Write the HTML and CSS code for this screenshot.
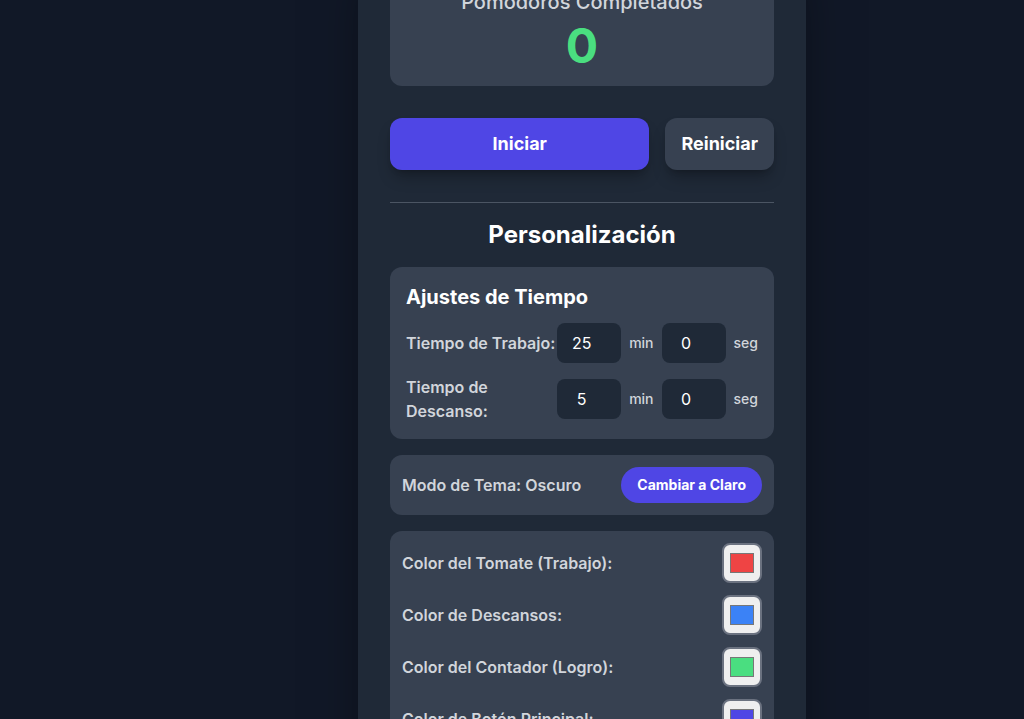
FILE: index.html
```html
<!DOCTYPE html>
<html lang="es">
<head>
<meta charset="utf-8">
<title>Pomodoro</title>
<link rel="stylesheet" href="styles.css">
</head>
<body>
<main class="panel">
  <section class="stats card">
    <h2 class="stats-title">Pomodoros Completados</h2>
    <div class="stats-count">0</div>
  </section>

  <div class="actions">
    <button class="btn btn-primary">Iniciar</button>
    <button class="btn btn-secondary">Reiniciar</button>
  </div>

  <hr class="divider">

  <h2 class="section-title">Personalización</h2>

  <section class="card time-card">
    <h3 class="card-title">Ajustes de Tiempo</h3>
    <div class="time-row">
      <label class="field-label">Tiempo de Trabajo:</label>
      <div class="time-inputs">
        <input class="num" type="number" value="25">
        <span class="unit">min</span>
        <input class="num" type="number" value="0">
        <span class="unit">seg</span>
      </div>
    </div>
    <div class="time-row">
      <label class="field-label">Tiempo de Descanso:</label>
      <div class="time-inputs">
        <input class="num" type="number" value="5">
        <span class="unit">min</span>
        <input class="num" type="number" value="0">
        <span class="unit">seg</span>
      </div>
    </div>
  </section>

  <section class="card theme-card">
    <span class="field-label">Modo de Tema: Oscuro</span>
    <button class="btn-pill">Cambiar a Claro</button>
  </section>

  <section class="card colors-card">
    <div class="color-row">
      <span class="field-label">Color del Tomate (Trabajo):</span>
      <span class="picker"><span class="swatch swatch-red"></span></span>
    </div>
    <div class="color-row">
      <span class="field-label">Color de Descansos:</span>
      <span class="picker"><span class="swatch swatch-blue"></span></span>
    </div>
    <div class="color-row">
      <span class="field-label">Color del Contador (Logro):</span>
      <span class="picker"><span class="swatch swatch-green"></span></span>
    </div>
    <div class="color-row">
      <span class="field-label">Color de Botón Principal:</span>
      <span class="picker"><span class="swatch swatch-indigo"></span></span>
    </div>
  </section>
</main>
</body>
</html>
```

FILE: styles.css
```css
* { box-sizing: border-box; }

html, body {
  margin: 0;
  padding: 0;
  overflow: hidden;
  height: 100%;
}

body {
  background: #111827;
  font-family: Inter, "Noto Sans", sans-serif;
  color: #ffffff;
}

.panel {
  width: 448px;
  margin: -60px 0 0 358px;
  padding: 32px;
  background: #1f2937;
  min-height: 900px;
  box-shadow: 0 25px 50px -12px rgba(0, 0, 0, 0.5);
  display: flex;
  flex-direction: column;
}

.card {
  background: #374151;
  border-radius: 12px;
}

.stats {
  padding: 16px;
  text-align: center;
}

.stats-title {
  margin: 0 0 6px;
  font-size: 20px;
  line-height: 28px;
  font-weight: 500;
  color: #d1d5db;
}

.stats-count {
  font-size: 48px;
  line-height: 48px;
  font-weight: 700;
  color: #4ade80;
}

.actions {
  display: flex;
  gap: 16px;
  margin-top: 32px;
}

.btn {
  border: 0;
  border-radius: 12px;
  padding: 12px 16px;
  font-family: inherit;
  font-size: 18px;
  line-height: 28px;
  font-weight: 700;
  color: #ffffff;
  box-shadow: 0 10px 15px -3px rgba(0, 0, 0, 0.25), 0 4px 6px -4px rgba(0, 0, 0, 0.25);
}

.btn-primary {
  flex: 1;
  background: #4f46e5;
}

.btn-secondary {
  background: #374151;
}

.divider {
  border: 0;
  border-top: 1px solid #4b5563;
  margin: 32px 0 16px;
}

.section-title {
  margin: 0 0 16px;
  text-align: center;
  font-size: 24px;
  line-height: 32px;
  font-weight: 700;
}

.time-card {
  padding: 16px;
  display: flex;
  flex-direction: column;
  gap: 12px;
}

.card-title {
  margin: 0;
  font-size: 20px;
  line-height: 28px;
  font-weight: 700;
}

.time-row {
  display: flex;
  align-items: center;
  justify-content: space-between;
}

.field-label {
  font-size: 16px;
  line-height: 24px;
  font-weight: 600;
  color: #d1d5db;
}

.time-inputs {
  display: flex;
  align-items: center;
  gap: 8px;
  flex-shrink: 0;
}

.num {
  width: 64px;
  height: 40px;
  padding: 8px;
  border: 0;
  border-radius: 8px;
  background: #1f2937;
  color: #ffffff;
  font-family: inherit;
  font-size: 16px;
  text-align: center;
}

.unit {
  font-size: 14px;
  line-height: 20px;
  font-weight: 500;
  color: #d1d5db;
}

.theme-card {
  margin-top: 16px;
  padding: 12px;
  display: flex;
  align-items: center;
  justify-content: space-between;
}

.btn-pill {
  border: 0;
  border-radius: 9999px;
  padding: 8px 16px;
  background: #4f46e5;
  color: #ffffff;
  font-family: inherit;
  font-size: 14px;
  line-height: 20px;
  font-weight: 700;
}

.colors-card {
  margin-top: 16px;
  padding: 12px;
  display: flex;
  flex-direction: column;
  gap: 12px;
}

.color-row {
  display: flex;
  align-items: center;
  justify-content: space-between;
}

.picker {
  width: 40px;
  height: 40px;
  border: 2px solid #6b7280;
  border-radius: 8px;
  background: #efefef;
  display: flex;
  align-items: center;
  justify-content: center;
}

.swatch {
  width: 24px;
  height: 20px;
  border: 1px solid #777777;
}

.swatch-red { background: #ef4444; }
.swatch-blue { background: #3b82f6; }
.swatch-green { background: #4ade80; }
.swatch-indigo { background: #4f46e5; }
```
